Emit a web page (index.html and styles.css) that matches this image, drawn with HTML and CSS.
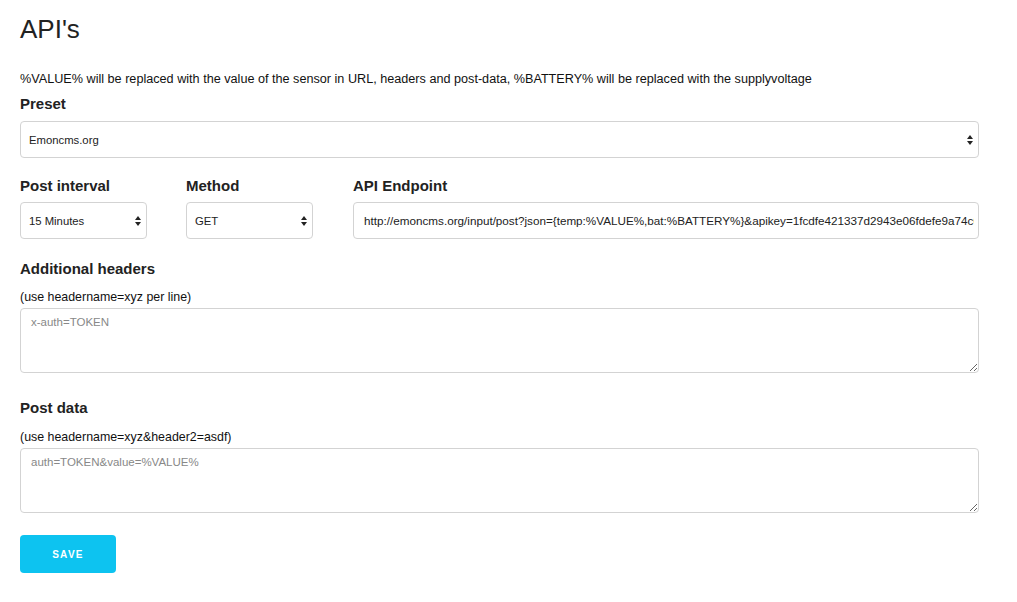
FILE: index.html
```html
<!DOCTYPE html>
<html>
<head>
<meta charset="utf-8">
<link rel="stylesheet" href="styles.css">
</head>
<body>
<div class="page">
  <h1 class="title">API's</h1>
  <p class="desc">%VALUE% will be replaced with the value of the sensor in URL, headers and post-data, %BATTERY% will be replaced with the supplyvoltage</p>

  <label class="label">Preset</label>
  <div class="select-wrap">
    <select class="control"><option>Emoncms.org</option></select>
    <svg class="arrows" width="6" height="10" viewBox="0 0 6 10"><path d="M3 0 L6 4 L0 4 Z M3 10 L6 6 L0 6 Z" fill="#222"/></svg>
  </div>

  <div class="row">
    <div class="col col-small">
      <label class="label">Post interval</label>
      <div class="select-wrap">
        <select class="control"><option>15 Minutes</option></select>
        <svg class="arrows" width="6" height="10" viewBox="0 0 6 10"><path d="M3 0 L6 4 L0 4 Z M3 10 L6 6 L0 6 Z" fill="#222"/></svg>
      </div>
    </div>
    <div class="col col-small">
      <label class="label">Method</label>
      <div class="select-wrap">
        <select class="control"><option>GET</option></select>
        <svg class="arrows" width="6" height="10" viewBox="0 0 6 10"><path d="M3 0 L6 4 L0 4 Z M3 10 L6 6 L0 6 Z" fill="#222"/></svg>
      </div>
    </div>
    <div class="col col-wide">
      <label class="label">API Endpoint</label>
      <input class="control input" type="text" value="http://emoncms.org/input/post?json={temp:%VALUE%,bat:%BATTERY%}&amp;apikey=1fcdfe421337d2943e06fdefe9a74c0b">
    </div>
  </div>

  <label class="label label-section">Additional headers</label>
  <p class="hint">(use headername=xyz per line)</p>
  <textarea class="area" placeholder="x-auth=TOKEN"></textarea>

  <label class="label label-section2">Post data</label>
  <p class="hint hint-second">(use headername=xyz&amp;header2=asdf)</p>
  <textarea class="area" placeholder="auth=TOKEN&amp;value=%VALUE%"></textarea>

  <button class="save">SAVE</button>
</div>
</body>
</html>
```

FILE: styles.css
```css
* { box-sizing: border-box; }
html, body { margin: 0; padding: 0; background: #fff; }
body {
  font-family: "Liberation Sans", Arial, sans-serif;
  color: #222;
}
.page {
  width: 979px;
  padding: 14px 0 0 20px;
  display: flex;
  flex-direction: column;
  align-items: stretch;
}
.title {
  margin: 0;
  font-size: 26px;
  font-weight: normal;
  line-height: 30px;
  color: #222;
}
.desc {
  margin: 27px 0 0 0;
  font-size: 12.65px;
  line-height: 16px;
  color: #111;
}
.label {
  display: block;
  font-size: 15px;
  font-weight: bold;
  line-height: 18px;
  color: #222;
}
.page > .label:first-of-type { margin-top: 8px; }
.select-wrap {
  position: relative;
  margin-top: 8px;
}
.row .select-wrap { margin-top: 7px; }
.control {
  width: 100%;
  height: 37px;
  border: 1px solid #d3d3d3;
  border-radius: 4px;
  background: #fff;
  font-family: "Liberation Sans", Arial, sans-serif;
  font-size: 11.3px;
  color: #222;
  padding: 0 8px;
  appearance: none;
  -webkit-appearance: none;
  outline: none;
  display: block;
}
.arrows {
  position: absolute;
  right: 6px;
  top: 14px;
  pointer-events: none;
}
.row {
  display: flex;
  gap: 39px;
  margin-top: 19px;
}
.col-small { width: 127px; flex: none; }
.col-wide { flex: 1; margin-left: 1px; }
.col-wide .input {
  margin-top: 7px;
  font-size: 11.7px;
  padding: 0 4px 0 10px;
}
.label-section { margin-top: 21px; }
.label-section2 { margin-top: 26px; }
.hint {
  margin: 11px 0 0 0;
  font-size: 12.4px;
  line-height: 16px;
  color: #111;
}
.hint-second { margin-top: 12px; }
.area {
  display: block;
  width: 100%;
  height: 65px;
  margin-top: 3px;
  border: 1px solid #d3d3d3;
  border-radius: 4px;
  padding: 7px 10px;
  font-family: "Liberation Sans", Arial, sans-serif;
  font-size: 11.5px;
  color: #222;
  resize: vertical;
  outline: none;
}
.area::placeholder { color: #888; }
.save {
  margin-top: 22px;
  width: 96px;
  height: 38px;
  align-self: flex-start;
  background: #0dc3f0;
  border: none;
  border-radius: 4px;
  color: #fff;
  font-family: "Liberation Sans", Arial, sans-serif;
  font-weight: bold;
  font-size: 10px;
  letter-spacing: 1.3px;
  cursor: pointer;
}
```
